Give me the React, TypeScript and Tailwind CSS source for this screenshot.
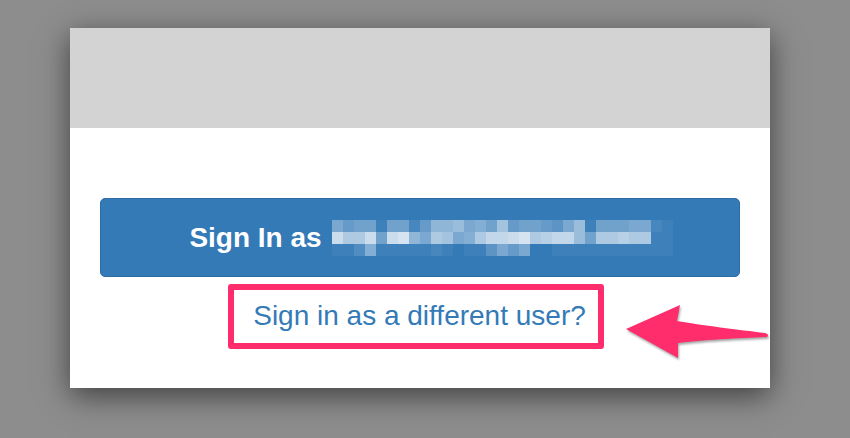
const row1 = [0.35, 0.25, 0.3, 0.3, 0.05, 0.3, 0.3, 0.1, 0.25, 0.45, 0.45, 0.5, 0.35, 0.4, 0.3, 0.55, 0.25, 0.3, 0.3, 0.25, 0.2, 0.35, 0.5, 0.05, 0.3, 0.3, 0.3, 0.35, 0.35, 0.1, 0.05];
const row2 = [0.75, 0.6, 0.6, 0.75, 0.3, 0.75, 0.8, 0.45, 0.35, 0.6, 0.55, 0.35, 0.4, 0.6, 0.7, 0.7, 0.75, 0.8, 0.6, 0.65, 0.7, 0.7, 0.5, 0.3, 0.6, 0.6, 0.65, 0.6, 0.6, 0.05, 0.05];
const row3 = [0.05, 0.05, 0.15, 0.4, 0.05, 0.05, 0.05, 0.05, 0.05, 0.1, 0.05, 0, 0.05, 0.05, 0.2, 0.35, 0.25, 0.35, 0, 0, 0.05, 0.05, 0.05, 0.05, 0.05, 0.05, 0.05, 0.05, 0.05, 0.05, 0.05];

// pixelated (redacted) email address
const BlurredEmail = () => (
  <span className="inline-flex flex-col">
    {[row1, row2, row3].map((row, r) => (
      <span key={r} className="flex">
        {row.map((o, i) => (
          <span
            key={i}
            className="h-[12px] w-[11px]"
            style={{ backgroundColor: `rgba(255,255,255,${o})` }}
          />
        ))}
      </span>
    ))}
  </span>
);

const Arrow = () => (
  <svg
    className="absolute left-[620px] top-[298px] drop-shadow-[1px_2px_1px_rgba(0,0,0,0.35)]"
    width="152"
    height="66"
    viewBox="620 298 152 66"
  >
    <path
      d="M626 329 L680 305 L677 321 C700 325 740 330 765 333 C769 334 769 337 765 337 C740 338 700 340 678 343 L678 358 Z"
      fill="#ff2d6c"
    />
  </svg>
);

const App = () => {
  return (
    <div className="relative h-[438px] w-[850px] overflow-hidden bg-[#8d8d8d] pt-[28px] pl-[70px] font-['Liberation_Sans',Arial,sans-serif]">
      <div className="flex h-[360px] w-[700px] flex-col bg-white shadow-[0_8px_28px_rgba(0,0,0,0.55)]">
        <div className="h-[100px] bg-[#d3d3d3]" />

        <div className="flex flex-col items-center px-[30px] pt-[70px]">
          <button className="flex h-[79px] w-full items-center justify-center gap-[10px] rounded-[5px] border border-[#2e6da4] bg-[#337ab7] pl-[22px] text-[28px] font-bold text-white">
            <span>Sign In as</span>
            <BlurredEmail />
          </button>

          <div className="mt-[7px] mr-[8px] rounded-[3px] border-[6px] border-[#ff2d6c] pt-[10px] pb-[11px] pl-[19px] pr-[12px]">
            <a className="block text-[28px] leading-[32px] text-[#337ab7]">
              Sign in as a different user?
            </a>
          </div>
        </div>
      </div>

      <Arrow />
    </div>
  );
};

export default App;
